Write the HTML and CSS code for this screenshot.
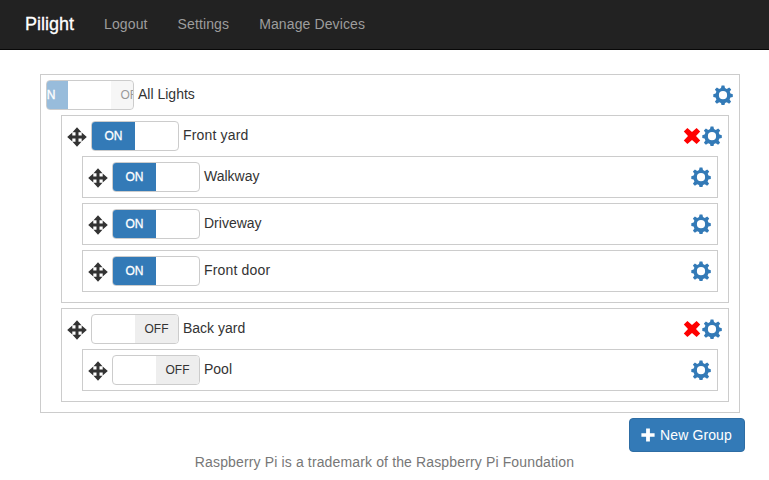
FILE: index.html
```html
<!DOCTYPE html>
<html lang="en">
<head>
<meta charset="utf-8">
<title>Pilight</title>
<link rel="stylesheet" href="styles.css">
</head>
<body>
<svg class="defs" aria-hidden="true">
  <symbol id="move" viewBox="0 0 20 20"><path d="M10 0.200 L14.500 5.300 H11.500 V8.500 H14.700 V5.500 L19.800 10 L14.700 14.500 V11.500 H11.500 V14.700 H14.500 L10 19.800 L5.500 14.700 H8.500 V11.500 H5.300 V14.500 L0.200 10 L5.300 5.500 V8.500 H8.500 V5.300 H5.500 Z"/></symbol>
  <symbol id="cog" viewBox="0 0 20 20"><path fill-rule="evenodd" d="M8.600 0.500h2.800l.6 2.600 1.800.8 2.400-1.500 2 2-1.500 2.300.8 1.900 2.300.6v2.800l-2.400.6-.8 1.800 1.500 2.300-2 2-2.300-1.500-1.800.9-.6 2.200H8.600l-.6-2.300-1.800-.8-2.300 1.500-2-2 1.500-2.300-.8-1.800-2.300-.6V9.200l2.300-.6.8-1.900-1.500-2.300 2-2 2.300 1.500 1.800-.8zM10 6.100a4.100 4.100 0 1 0 0 8.200a4.100 4.100 0 1 0 0-8.200z"/></symbol>
  <symbol id="remove" viewBox="0 0 18 18"><path d="M4.400 .9 L9 5 L13.600 .9 L17.200 4.500 L13 9 L17.200 13.500 L13.600 17.100 L9 13 L4.400 17.100 L.8 13.500 L5 9 L.8 4.500 Z"/></symbol>
  <symbol id="plus" viewBox="0 0 14 14"><path d="M5.100.5h3.800v4.700h4.700v3.600H8.900v4.700H5.100V8.800H.4V5.200h4.700z"/></symbol>
</svg>
<nav class="navbar">
  <a class="brand">Pilight</a>
  <a class="nav-link">Logout</a>
  <a class="nav-link">Settings</a>
  <a class="nav-link">Manage Devices</a>
</nav>
<main class="content">
  <section class="group root">
    <div class="row">
      <div class="switch mixed"><div class="track"><span class="on">ON</span><span class="knob"></span><span class="off">OFF</span></div></div>
      <span class="name tight">All Lights</span>
      <svg class="cog"><use href="#cog"/></svg>
    </div>
    <section class="group">
      <div class="row">
        <svg class="move"><use href="#move"/></svg>
        <div class="switch"><div class="track"><span class="on">ON</span><span class="knob"></span></div></div>
        <span class="name">Front yard</span>
        <svg class="remove"><use href="#remove"/></svg>
        <svg class="cog"><use href="#cog"/></svg>
      </div>
      <div class="group">
        <div class="row">
          <svg class="move"><use href="#move"/></svg>
          <div class="switch"><div class="track"><span class="on">ON</span><span class="knob"></span></div></div>
          <span class="name tight">Walkway</span>
          <svg class="cog"><use href="#cog"/></svg>
        </div>
      </div>
      <div class="group">
        <div class="row">
          <svg class="move"><use href="#move"/></svg>
          <div class="switch"><div class="track"><span class="on">ON</span><span class="knob"></span></div></div>
          <span class="name tight">Driveway</span>
          <svg class="cog"><use href="#cog"/></svg>
        </div>
      </div>
      <div class="group">
        <div class="row">
          <svg class="move"><use href="#move"/></svg>
          <div class="switch"><div class="track"><span class="on">ON</span><span class="knob"></span></div></div>
          <span class="name">Front door</span>
          <svg class="cog"><use href="#cog"/></svg>
        </div>
      </div>
    </section>
    <section class="group">
      <div class="row">
        <svg class="move"><use href="#move"/></svg>
        <div class="switch"><div class="track"><span class="knob"></span><span class="off">OFF</span></div></div>
        <span class="name tight">Back yard</span>
        <svg class="remove"><use href="#remove"/></svg>
        <svg class="cog"><use href="#cog"/></svg>
      </div>
      <div class="group">
        <div class="row">
          <svg class="move"><use href="#move"/></svg>
          <div class="switch"><div class="track"><span class="knob"></span><span class="off">OFF</span></div></div>
          <span class="name tight">Pool</span>
          <svg class="cog"><use href="#cog"/></svg>
        </div>
      </div>
    </section>
  </section>
  <div class="actions">
    <button class="new-group" type="button"><svg class="plus"><use href="#plus"/></svg>New Group</button>
  </div>
</main>
<footer class="footer">Raspberry Pi is a trademark of the Raspberry Pi Foundation</footer>
</body>
</html>
```
FILE: styles.css
```css
* { box-sizing: border-box; }
body {
  margin: 0;
  background: #fff;
  color: #333;
  font: 14px/20px "Liberation Sans", Arial, sans-serif;
}
svg { flex: none; fill: currentColor; }
.defs { display: none; }
.navbar {
  display: flex;
  align-items: center;
  height: 50px;
  padding: 0 0 1px 10px;
  background: #222;
  border-bottom: 1px solid #080808;
}
.brand { padding: 0 15px; color: #fff; font-size: 18px; -webkit-text-stroke: 0.3px #fff; }
.nav-link { padding: 0 15px; color: #9d9d9d; letter-spacing: 0.12px; }
.content { padding: 24px 24px 0 40px; }
.group { padding: 5px; border: 1px solid #ccc; }
.root { width: 700px; }
.group .group { margin: 5px 5px 5px 15px; }
.row { display: flex; align-items: center; height: 30px; }
.move { width: 20px; height: 20px; margin: 2px 4.5px 0 -0.5px; }
.switch {
  flex: none;
  width: 88px;
  height: 30px;
  overflow: hidden;
  border: 1px solid #ccc;
  border-radius: 4px;
}
.track { display: flex; height: 28px; }
.track span {
  flex: none;
  width: 43px;
  font-size: 12px;
  line-height: 28px;
  text-align: center;
}
.track .on { background: #337ab7; color: #fff; -webkit-text-stroke: 0.3px #fff; }
.track .off { background: #eee; color: #333; }
.mixed .track { margin-left: -22px; opacity: 0.5; }
.name { margin: -2px auto 0 4px; letter-spacing: 0.17px; }
.name.tight { letter-spacing: 0; }
.cog { width: 20px; height: 20px; margin-right: 1px; color: #337ab7; }
.remove { width: 18px; height: 18px; margin-right: 1px; color: red; }
.actions { display: flex; justify-content: flex-end; padding-top: 5px; }
.new-group {
  display: flex;
  align-items: center;
  width: 116px;
  height: 34px;
  padding: 0 11px;
  border: 1px solid #2e6da4;
  border-radius: 4px;
  background: #337ab7;
  color: #fff;
  font: inherit;
  letter-spacing: 0.12px;
  white-space: nowrap;
}
.plus { width: 14px; height: 14px; margin-right: 5px; }
.footer { color: #777; letter-spacing: 0.14px; text-align: center; }
```
